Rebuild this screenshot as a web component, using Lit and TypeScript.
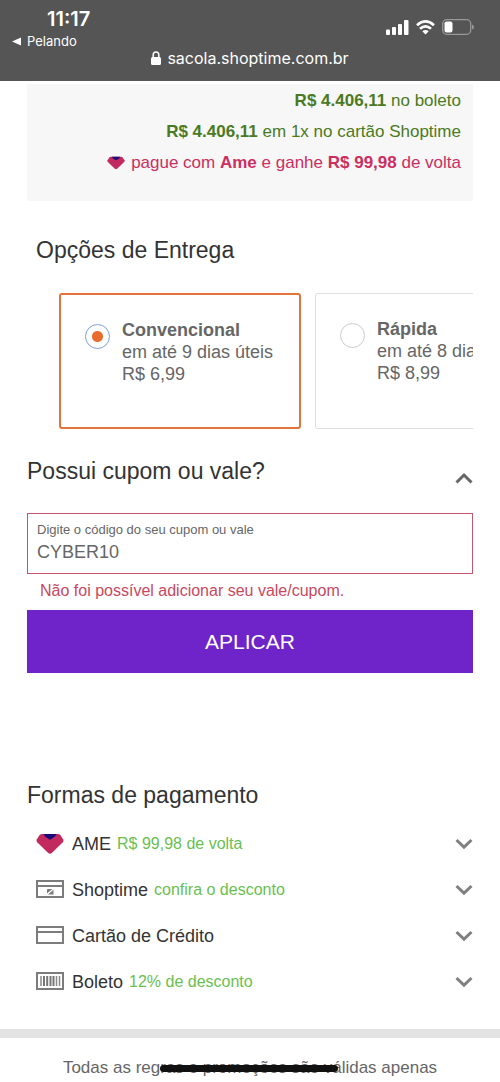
import { LitElement, html, css, svg } from "lit";
import { customElement, state } from "lit/decorators.js";
import { classMap } from "lit/directives/class-map.js";

const gem = svg`
  <path d="M6 1 H22 Q23.500 1 24.500 2.200 L27.300 6.500 Q28 8 26.800 9.300 L15.800 20 Q14 21.500 12.200 20 L1.200 9.300 Q0 8 .7 6.500 L3.500 2.200 Q4.500 1 6 1Z" fill="#c22a5f"/>
  <path d="M7.500 1 H20.500 L19 3.600 L15 6.300 Q14 6.800 13 6.300 L9 3.600Z" fill="#1d0a78"/>`;

const card = svg`
  <rect x="1" y="2" width="26" height="16" fill="none" stroke="#7c7c7c" stroke-width="2"/>
  <path d="M1 7H27" stroke="#7c7c7c" stroke-width="2"/>`;

const icons: Record<string, unknown> = {
  gem,
  card,
  store: svg`${card}
    <path d="M11.500 10H16.500L11 14.500V10.500Z" fill="#7c7c7c"/>
    <path d="M17.500 10.500V15Q17.500 15.500 17 15.500H12Z" fill="#7c7c7c"/>
    <path d="M10.500 16L18 9.500" stroke="#fff" stroke-width="1"/>`,
  barcode: svg`
    <rect x="1" y="2" width="26" height="16" fill="none" stroke="#7c7c7c" stroke-width="2"/>
    <path d="M5 5V15M20.500 5V15M23.500 5V15" stroke="#8a8a8a" stroke-width="1.500"/>
    <path d="M8 5V15M11.200 5V15M14.500 5V15M17.500 5V15" stroke="#777" stroke-width="2"/>`,
};

const icon = (name: string, cls = "icon") =>
  html`<svg class=${cls} viewBox="0 0 28 22" aria-hidden="true">${icons[name]}</svg>`;

const chevron = (up = false) => html`
  <svg class="chevron" viewBox="0 0 18 12" aria-hidden="true">
    <path d=${up ? "M1.500 10.500L9 3L16.500 10.500" : "M1.500 2L9 9.200L16.500 2"} />
  </svg>`;

@customElement("app-root")
export class AppRoot extends LitElement {
  @state() private delivery = "Convencional";
  @state() private couponOpen = true;

  private options = [
    { name: "Convencional", time: "em até 9 dias úteis", price: "R$ 6,99" },
    { name: "Rápida", time: "em até 8 dias úteis", price: "R$ 8,99" },
  ];

  private payments = [
    { icon: "gem", name: "AME", note: "R$ 99,98 de volta" },
    { icon: "store", name: "Shoptime", note: "confira o desconto" },
    { icon: "card", name: "Cartão de Crédito", note: "" },
    { icon: "barcode", name: "Boleto", note: "12% de desconto" },
  ];

  static styles = css`
    :host {
      display: block;
      min-height: 100vh;
      background: #fff;
      color: #333;
      font: 18px/22px "Liberation Sans", Arial, sans-serif;
      overflow: hidden;
    }
    * { box-sizing: border-box; }
    h2, p { margin: 0; }
    h2 { font-size: 23px; line-height: 28px; font-weight: 400; }
    button {
      font: inherit;
      color: inherit;
      border: 0;
      border-radius: 0;
      background: none;
      padding: 0;
      cursor: pointer;
    }
    .browser {
      background: #555;
      color: #fff;
      font-family: Inter, sans-serif;
      height: 81px;
      padding: 8px 0 0;
    }
    .status { display: flex; justify-content: space-between; padding: 0 26px 0 12px; }
    .clock { font-size: 20px; line-height: 22px; font-weight: 600; padding-left: 35px; }
    .back { display: flex; align-items: center; gap: 6px; font-size: 13px; line-height: 22px; }
    .back svg { width: 9px; height: 9px; }
    .signals { display: flex; gap: 7px; height: 38px; align-items: center; }
    .address {
      display: flex;
      justify-content: center;
      align-items: center;
      gap: 6px;
      font-size: 16px;
      line-height: 20px;
      margin-top: -4px;
    }
    .address svg { width: 10px; height: 14px; }
    main { padding: 3px 27px 0; }
    .totals {
      background: #f7f7f7;
      padding: 1px 12px 23px;
      text-align: right;
      color: #4b7a22;
      font-size: 17px;
      line-height: 31px;
    }
    .ame { color: #cb2f60; }
    .gem { width: 18px; height: 14px; margin-right: 6px; vertical-align: -2px; }
    .delivery { padding-top: 35px; }
    .delivery h2 { padding-left: 9px; }
    .options { display: flex; gap: 14px; overflow: hidden; margin: 29px 0 0 32px; }
    .option {
      display: flex;
      gap: 12px;
      flex: 0 0 242px;
      min-height: 136px;
      padding: 24px;
      border: 1px solid #ddd;
      border-radius: 3px;
      color: #666;
      white-space: nowrap;
    }
    .selected { border: 2px solid #e2733a; }
    .option strong { display: block; }
    .radio {
      appearance: none;
      flex: none;
      width: 25px;
      height: 25px;
      margin: 5px 0 0;
      border: 1px solid #ccc;
      border-radius: 50%;
    }
    .radio:checked {
      border-color: #7f9fdb;
      background: radial-gradient(circle, #ea6c2d 5px, transparent 6px);
    }
    .toggle {
      display: flex;
      width: 100%;
      justify-content: space-between;
      text-align: left;
      margin-top: 28px;
    }
    .chevron { width: 18px; height: 12px; fill: none; stroke: #808080; stroke-width: 3; }
    .toggle .chevron { margin-top: 15px; stroke: #666; }
    .field {
      display: flex;
      flex-direction: column;
      border: 1px solid #c0576b;
      height: 61px;
      margin-top: 28px;
      padding: 7px 9px;
      color: #666;
    }
    .field label { font-size: 13px; line-height: 17px; }
    .field input {
      font: inherit;
      line-height: 28px;
      height: 30px;
      color: inherit;
      border: 0;
      padding: 0;
      width: 100%;
      outline: none;
      background: none;
    }
    .error { color: #c9485e; font-size: 16px; line-height: 20px; padding: 7px 13px 9px; }
    .apply {
      display: block;
      width: 100%;
      background: #6e24c8;
      color: #fff;
      font-size: 21px;
      line-height: 63px;
    }
    .payments { padding-top: 108px; }
    .methods { padding: 12px 0 24px; }
    .method {
      display: flex;
      align-items: center;
      width: 100%;
      height: 46px;
      padding-left: 9px;
      text-align: left;
    }
    .icon { width: 28px; height: 22px; margin-right: 8px; }
    .note { color: #6abf4f; font-size: 16px; margin-left: 6px; }
    .method .chevron { margin-left: auto; }
    footer {
      border-top: 9px solid #e3e3e3;
      padding: 19px 27px 4px;
      text-align: center;
      color: #666;
      font-size: 17px;
    }
    .struck { position: relative; }
    .struck::after {
      content: "";
      position: absolute;
      left: 0;
      right: -6px;
      top: 7px;
      height: 7px;
      border-radius: 4px;
      background: #111;
    }
  `;

  render() {
    return html`
      <header class="browser">
        <div class="status">
          <div>
            <div class="clock">11:17</div>
            <div class="back">
              <svg viewBox="0 0 9 9" aria-hidden="true"><path d="M0 4.500L9 .5V8.500Z" fill="#fff"/></svg>
              <span>Pelando</span>
            </div>
          </div>
          <div class="signals">
            <svg width="23" height="15" viewBox="0 0 23 15" fill="#fff" aria-hidden="true">
              <rect x="0" y="9.500" width="4" height="5.500" rx="1"/>
              <rect x="6" y="7" width="4" height="8" rx="1"/>
              <rect x="12" y="4" width="4" height="11" rx="1"/>
              <rect x="18" y="0" width="4.500" height="15" rx="1"/>
            </svg>
            <svg width="19" height="15" viewBox="0 0 19 15" fill="none" stroke="#fff" stroke-width="2.600" aria-hidden="true">
              <path d="M1 5.200Q9.500 -2.400 18 5.200"/>
              <path d="M4 8.800Q9.500 3.800 15 8.800"/>
              <path d="M9.500 14.500L6.300 11.200Q9.500 8.600 12.700 11.200Z" fill="#fff" stroke="none"/>
            </svg>
            <svg width="32" height="16" viewBox="0 0 32 16" aria-hidden="true">
              <rect x=".7" y=".7" width="28" height="14.600" rx="4" fill="none" stroke="#999" stroke-width="1.300"/>
              <rect x="2.500" y="2.500" width="8" height="11" rx="2" fill="#fff"/>
              <path d="M30 5.500Q32 6 32 8T30 10.500Z" fill="#999"/>
            </svg>
          </div>
        </div>
        <div class="address">
          <svg viewBox="0 0 10 14" aria-hidden="true">
            <rect y="6" width="10" height="8" rx="1.500" fill="#fff"/>
            <path d="M2.200 7V4Q2.200 1 5 1T7.800 4V7" fill="none" stroke="#fff" stroke-width="1.500"/>
          </svg>
          <span>sacola.shoptime.com.br</span>
        </div>
      </header>

      <main>
        <section class="totals">
          <p><strong>R$ 4.406,11</strong> no boleto</p>
          <p><strong>R$ 4.406,11</strong> em 1x no cartão Shoptime</p>
          <p class="ame">${icon("gem", "gem")}pague com <strong>Ame</strong> e ganhe <strong>R$ 99,98</strong> de volta</p>
        </section>

        <section class="delivery">
          <h2>Opções de Entrega</h2>
          <div class="options">
            ${this.options.map((o) => html`
              <label class=${classMap({ option: true, selected: o.name === this.delivery })}>
                <input class="radio" type="radio" name="delivery"
                  .checked=${o.name === this.delivery}
                  @change=${() => (this.delivery = o.name)} />
                <span><strong>${o.name}</strong>${o.time}<br />${o.price}</span>
              </label>`)}
          </div>
        </section>

        <section>
          <h2>
            <button class="toggle" aria-expanded=${this.couponOpen}
              @click=${() => (this.couponOpen = !this.couponOpen)}>
              <span>Possui cupom ou vale?</span>${chevron(this.couponOpen)}
            </button>
          </h2>
          ${this.couponOpen ? html`
            <div class="field">
              <label for="coupon">Digite o código do seu cupom ou vale</label>
              <input id="coupon" type="text" value="CYBER10" aria-describedby="coupon-error" />
            </div>
            <p class="error" id="coupon-error">Não foi possível adicionar seu vale/cupom.</p>
            <button class="apply">APLICAR</button>` : null}
        </section>

        <section class="payments">
          <h2>Formas de pagamento</h2>
          <div class="methods">
            ${this.payments.map((p) => html`
              <button class="method">
                ${icon(p.icon)}
                <span>${p.name}</span>
                ${p.note ? html`<span class="note">${p.note}</span>` : null}
                ${chevron()}
              </button>`)}
          </div>
        </section>
      </main>

      <footer>Todas as reg<span class="struck">ras e promoções são v</span>álidas apenas</footer>
    `;
  }
}
